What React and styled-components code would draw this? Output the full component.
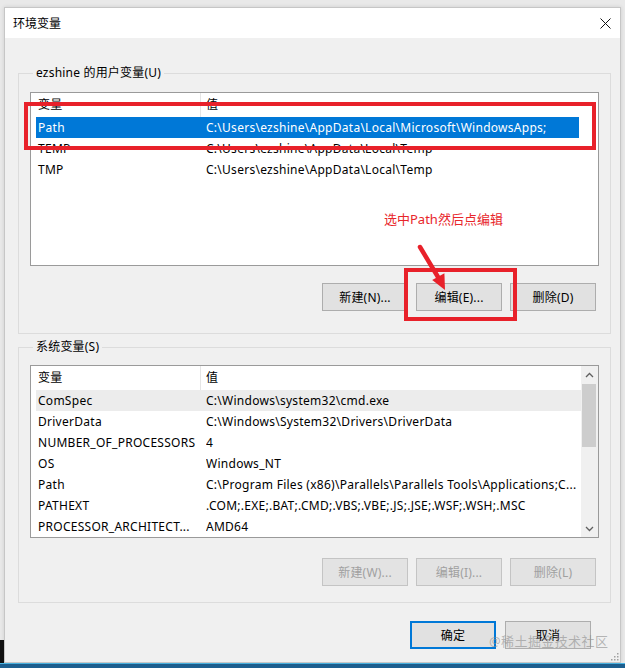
import React from 'react';
import styled, { createGlobalStyle } from 'styled-components';

const GlobalStyle = createGlobalStyle`
  html, body {
    margin: 0;
    padding: 0;
    background: #e9e9e9;
  }
  body {
    font-family: "Noto Sans", "Noto Sans CJK SC", sans-serif;
    font-size: 12px;
    color: #000;
  }
`;

const Screen = styled.div`
  width: 625px;
  height: 668px;
  display: flex;
  flex-direction: column;
  overflow: hidden;
  background: linear-gradient(to bottom, #e9e9e9 640px, #111 640px);
  background-size: 4px 100%;
  background-repeat: no-repeat;
  background-color: #e9e9e9;
`;

const Window = styled.div`
  position: relative;
  box-sizing: border-box;
  width: 617px;
  height: 656px;
  margin: 7px 0 0 4px;
  border: 1px solid #c6c6c6;
  background: #f0f0f0;
  display: flex;
  flex-direction: column;
  box-shadow: 0 0 4px rgba(0, 0, 0, 0.12);
`;

const TitleBar = styled.div`
  height: 30px;
  background: #fff;
  display: flex;
  align-items: center;
  justify-content: space-between;
  padding: 0 9px 0 8px;
`;

const Title = styled.span`
  font-size: 12px;
  line-height: 16px;
  padding-top: 1px;
`;

const CloseButton = styled.div`
  width: 11px;
  height: 11px;
  display: flex;
`;

const Body = styled.div`
  flex: 1;
  padding: 35px 9px 0 13px;
  display: flex;
  flex-direction: column;
`;

const GroupBox = styled.div`
  border: 1px solid #dcdcdc;
  padding: 0 11px ${(p) => p.$bottom}px 11px;
  margin-top: ${(p) => p.$top}px;
`;

const GroupTitle = styled.div`
  margin: -9px 0 0 3px;
  width: fit-content;
  padding: 0 3px;
  background: #f0f0f0;
  line-height: 16px;
  letter-spacing: 0.2px;
`;

const ListView = styled.div`
  box-sizing: border-box;
  margin-top: ${(p) => p.$top}px;
  height: ${(p) => p.$height}px;
  border: 1px solid #9a9a9a;
  background: #fff;
  display: flex;
  overflow: hidden;
  letter-spacing: 0.27px;
`;

const ListContent = styled.div`
  flex: 1;
  min-width: 0;
  padding-right: ${(p) => (p.$scroll ? 0 : 19)}px;
`;

const HeaderRow = styled.div`
  display: grid;
  grid-template-columns: 165px 1fr;
  height: 24px;
  margin-left: 5px;
`;

const HeaderCell = styled.div`
  line-height: 24px;
  padding-left: ${(p) => (p.$first ? 2 : 5)}px;
  border-right: ${(p) => (p.$first ? '1px solid #e5e5e5' : 'none')};
`;

const Row = styled.div`
  display: grid;
  grid-template-columns: 170px 1fr;
  height: 21px;
  line-height: 21px;
  margin-left: 5px;
  background: ${(p) => (p.$selected ? '#0078d7' : p.$soft ? '#ececec' : 'transparent')};
  color: ${(p) => (p.$selected ? '#fff' : '#000')};
`;

const Cell = styled.div`
  padding-left: ${(p) => (p.$first ? 2 : 0)}px;
  white-space: nowrap;
  overflow: hidden;
`;

const ScrollBar = styled.div`
  width: 17px;
  background: #f0f0f0;
  display: flex;
  flex-direction: column;
`;

const ScrollArrow = styled.div`
  height: 17px;
  display: flex;
  align-items: center;
  justify-content: center;
`;

const ScrollTrack = styled.div`
  flex: 1;
  padding-top: 1px;
`;

const ScrollThumb = styled.div`
  height: 63px;
  margin: 0 2px 0 1px;
  background: #cdcdcd;
`;

const ButtonRow = styled.div`
  display: flex;
  justify-content: flex-end;
  gap: 8px;
  margin-top: ${(p) => p.$top}px;
  padding-right: 3px;
`;

const Button = styled.button`
  box-sizing: border-box;
  width: 86px;
  height: 28px;
  font-family: inherit;
  font-size: 12px;
  letter-spacing: 0.2px;
  padding: 0;
  border-style: solid;
  border-width: ${(p) => (p.$default ? 2 : 1)}px;
  color: ${(p) => (p.disabled ? '#a0a0a0' : '#000')};
  border-color: ${(p) => (p.disabled ? '#c4c4c4' : p.$default ? '#0078d7' : '#adadad')};
  background: ${(p) => (p.disabled ? '#e3e3e3' : '#e1e1e1')};
`;

const Footer = styled.div`
  display: flex;
  justify-content: flex-end;
  gap: 9px;
  margin-top: 18px;
  padding-right: 20px;
`;

const Taskbar = styled.div`
  flex: 1;
  border-top: 1px solid #4bb8e8;
  background: #1d5f8f;
`;

const Watermark = styled.div`
  position: absolute;
  left: 484px;
  top: 625px;
  font-size: 13px;
  line-height: 17px;
  color: rgba(140, 140, 140, 0.6);
  letter-spacing: 0.4px;
  pointer-events: none;
`;

const Grip = styled.svg`
  position: absolute;
  right: 1px;
  bottom: 1px;
`;

const RedBox = styled.div`
  position: absolute;
  box-sizing: border-box;
  border: 4px solid #e8212a;
  left: ${(p) => p.$x}px;
  top: ${(p) => p.$y}px;
  width: ${(p) => p.$w}px;
  height: ${(p) => p.$h}px;
`;

const RedNote = styled.div`
  position: absolute;
  left: 379px;
  top: 202px;
  font-size: 13px;
  line-height: 18px;
  color: #e8262b;
`;

const Arrow = styled.svg`
  position: absolute;
  left: 401px;
  top: 221px;
`;

const userVars = [
  ['Path', 'C:\\Users\\ezshine\\AppData\\Local\\Microsoft\\WindowsApps;'],
  ['TEMP', 'C:\\Users\\ezshine\\AppData\\Local\\Temp'],
  ['TMP', 'C:\\Users\\ezshine\\AppData\\Local\\Temp'],
];

const systemVars = [
  ['ComSpec', 'C:\\Windows\\system32\\cmd.exe'],
  ['DriverData', 'C:\\Windows\\System32\\Drivers\\DriverData'],
  ['NUMBER_OF_PROCESSORS', '4'],
  ['OS', 'Windows_NT'],
  ['Path', 'C:\\Program Files (x86)\\Parallels\\Parallels Tools\\Applications;C...'],
  ['PATHEXT', '.COM;.EXE;.BAT;.CMD;.VBS;.VBE;.JS;.JSE;.WSF;.WSH;.MSC'],
  ['PROCESSOR_ARCHITECT...', 'AMD64'],
];

const Chevron = ({ up }) => (
  <svg width="9" height="6" viewBox="0 0 9 6">
    <path
      d={up ? 'M1 5 L4.5 1.5 L8 5' : 'M1 1 L4.5 4.5 L8 1'}
      fill="none"
      stroke="#606060"
      strokeWidth="1.3"
    />
  </svg>
);

const VarList = ({ rows, height, top, scroll, selected, soft }) => (
  <ListView $height={height} $top={top}>
    <ListContent $scroll={scroll}>
      <HeaderRow>
        <HeaderCell $first>变量</HeaderCell>
        <HeaderCell>值</HeaderCell>
      </HeaderRow>
      {rows.map(([name, value], i) => (
        <Row key={name + i} $selected={i === selected} $soft={i === soft}>
          <Cell $first>{name}</Cell>
          <Cell>{value}</Cell>
        </Row>
      ))}
    </ListContent>
    {scroll && (
      <ScrollBar>
        <ScrollArrow><Chevron up /></ScrollArrow>
        <ScrollTrack><ScrollThumb /></ScrollTrack>
        <ScrollArrow><Chevron /></ScrollArrow>
      </ScrollBar>
    )}
  </ListView>
);

export default function App() {
  return (
    <>
      <GlobalStyle />
      <Screen>
        <Window>
          <TitleBar>
            <Title>环境变量</Title>
            <CloseButton>
              <svg width="11" height="11" viewBox="0 0 11 11">
                <path d="M0.5 0.5 L10.5 10.5 M10.5 0.5 L0.5 10.5" stroke="#111" strokeWidth="1" />
              </svg>
            </CloseButton>
          </TitleBar>
          <Body>
            <GroupBox $top={0} $bottom={22}>
              <GroupTitle>ezshine 的用户变量(U)</GroupTitle>
              <VarList rows={userVars} height={174} top={11} selected={0} />
              <ButtonRow $top={17}>
                <Button>新建(N)...</Button>
                <Button>编辑(E)...</Button>
                <Button>删除(D)</Button>
              </ButtonRow>
            </GroupBox>
            <GroupBox $top={13} $bottom={16}>
              <GroupTitle>系统变量(S)</GroupTitle>
              <VarList rows={systemVars} height={173} top={10} scroll soft={0} />
              <ButtonRow $top={20}>
                <Button disabled>新建(W)...</Button>
                <Button disabled>编辑(I)...</Button>
                <Button disabled>删除(L)</Button>
              </ButtonRow>
            </GroupBox>
            <Footer>
              <Button $default>确定</Button>
              <Button>取消</Button>
            </Footer>
          </Body>

          <RedBox $x={19} $y={94} $w={572} $h={48} />
          <RedBox $x={399} $y={260} $w={113} $h={53} />
          <RedNote>选中Path然后点编辑</RedNote>
          <Arrow width="45" height="62" viewBox="0 0 45 62">
            <path d="M14 18 L32 48" stroke="#e8212a" strokeWidth="4.5" strokeLinecap="round" />
            <path d="M39 61 L38.4 44.3 L26.2 51.1 Z" fill="#e8212a" />
          </Arrow>
          <Watermark>@稀土掘金技术社区</Watermark>
          <Grip width="9" height="9" viewBox="0 0 9 9">
            {[[7, 1], [7, 4], [4, 4], [7, 7], [4, 7], [1, 7]].map(([x, y]) => (
              <rect key={`${x}-${y}`} x={x} y={y} width="1.5" height="1.5" fill="#a0a0a0" />
            ))}
          </Grip>
        </Window>
        <Taskbar />
      </Screen>
    </>
  );
}
